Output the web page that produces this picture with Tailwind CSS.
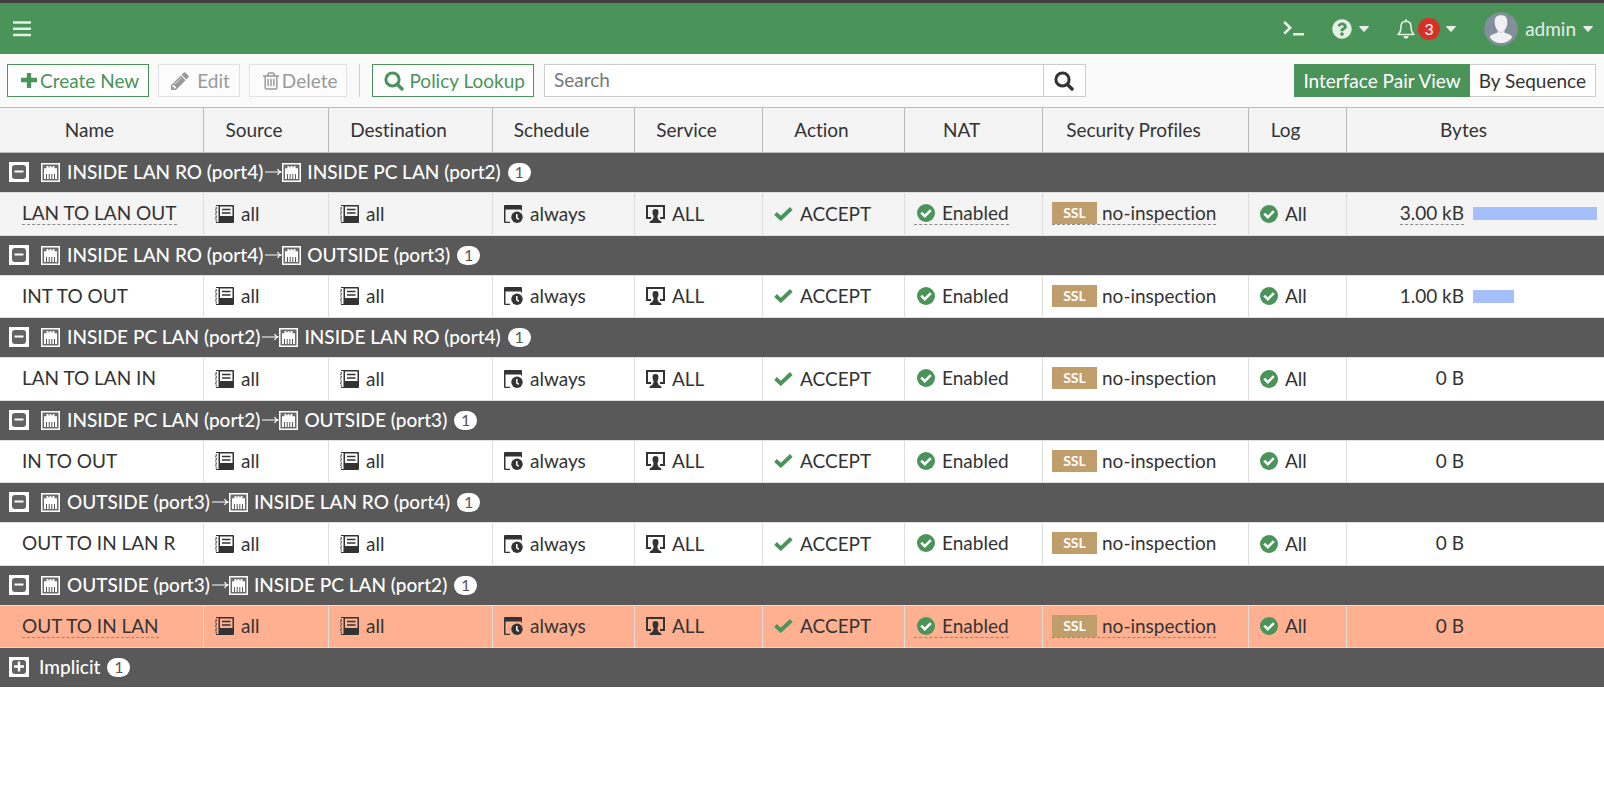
<!DOCTYPE html>
<html lang="en">
<head>
<meta charset="utf-8">
<title>Firewall Policy</title>
<script src="https://cdn.jsdelivr.net/npm/@tailwindcss/browser@4"></script>
</head>
<body class="min-h-screen bg-white font-['Lato',sans-serif] text-[19px] leading-6 text-[#333] [font-variant-ligatures:none]">
<svg class="hidden" aria-hidden="true">
  <symbol id="caret" viewBox="0 0 10 6"><path fill="currentColor" d="M.8 0h8.4q1 .2.5 1L5.6 5.4q-.6.5-1.2 0L.3 1Q-.1.2.8 0z"/></symbol>
  <symbol id="search" viewBox="0 0 20 20"><circle cx="8.5" cy="8.5" r="6.6" fill="none" stroke="currentColor" stroke-width="3"/><path d="M13.2 13.2l4.8 4.8" stroke="currentColor" stroke-width="3.4" stroke-linecap="round"/></symbol>
  <symbol id="book" viewBox="0 0 19 18"><path fill="currentColor" d="M3.500 0H18q1 0 1 1v16q0 1-1 1H3.500zM5 1.500V11h12.500V1.500z" fill-rule="evenodd"/><path d="M7 4.500h8.500M7 8h8.500" stroke="currentColor" stroke-width="1.300"/><path d="M1 .5h3M0 4.800h1.500M0 9h1.500M0 13.200h1.500M1 17.500h3M1.200 2v2M1.200 6v2M1.200 10.500v2M1.200 14.500v2" stroke="currentColor" stroke-width="1"/></symbol>
  <symbol id="schedule" viewBox="0 0 19 18"><path fill="currentColor" d="M1 0h16q1 0 1 1v4.500h-1V4.500H1.500v12.300H6V18H1q-1 0-1-1V1q0-1 1-1z"/><circle cx="13" cy="12.300" r="5.700" fill="currentColor"/><path d="M12.800 9v3.800l2 1.500" fill="none" stroke="#fff" stroke-width="1.500"/></symbol>
  <symbol id="service" viewBox="0 0 19 18"><path fill="none" stroke="currentColor" stroke-width="2" d="M5 13H1V1h17v12h-4"/><path fill="currentColor" d="M9.500 4q3 0 3 3.300 0 2-1 3.500v1.700q0 1 1 1.200v1.300q3 .5 3 3h-12q0-2.500 3-3v-1.300q1-.2 1-1.200v-1.700q-1-1.500-1-3.500Q6.500 4 9.500 4z"/></symbol>
  <symbol id="tick" viewBox="0 0 19 14"><path fill="none" stroke="currentColor" stroke-width="3.800" d="M1.500 6.500l5.300 5L17.300 1.500"/></symbol>
  <symbol id="ok" viewBox="0 0 18 18"><circle cx="9" cy="9" r="9" fill="currentColor"/><path fill="none" stroke="#fff" stroke-width="2.600" d="M4.200 8.600l3.600 3.600 6-6"/></symbol>
  <symbol id="port" viewBox="0 0 19 19"><path fill="#6a6a6a" stroke="#fff" stroke-width="1.500" d="M.75.75h17.500v17.500H.75z"/><path fill="#fff" d="M3 16V5.200h2.500V3h1.800v1.200h1.400V3h1.600v1.200h1.400V3h1.800v2.200H16V16z"/><path stroke="#595959" stroke-width="1" d="M5.500 11v5M8.200 11v5M10.800 11v5M13.500 11v5"/></symbol>
  <symbol id="arrow" viewBox="0 0 17 10"><path fill="none" stroke="currentColor" stroke-width="1.200" d="M0 5h16M12.500 2q1 2.200 3.500 3-2.500.8-3.500 3"/></symbol>
  <symbol id="minus" viewBox="0 0 20 20"><path fill="#fff" d="M0 0h20v20H0z"/><rect x="3" y="3" width="14" height="14" rx="3" fill="#636363"/><path stroke="#fff" stroke-width="2" d="M5.500 9.500h9"/></symbol>
  <symbol id="plus" viewBox="0 0 20 20"><path fill="#fff" d="M0 0h20v20H0z"/><rect x="3" y="3" width="14" height="14" rx="3" fill="#636363"/><path stroke="#fff" stroke-width="2.400" d="M5 9.500h10M10 4.500v10"/></symbol>
</svg>

<header class="flex h-[54px] items-center border-t-3 border-[#404040] bg-[#4a9359] pr-[11px] pl-[13px] text-[#e4efe6]">
  <button type="button" aria-label="Menu"><svg class="h-4 w-[18px]" viewBox="0 0 18 16"><path stroke="currentColor" stroke-width="2.600" d="M0 1.500h18M0 7.800h18M0 14h18"/></svg></button>
  <nav class="ml-auto flex items-center">
    <button type="button" aria-label="CLI console" class="mr-7"><svg class="h-[15px] w-[21px]" viewBox="0 0 21 15"><path fill="none" stroke="currentColor" stroke-width="2.600" d="M1.200 1l6 5.800-6 5.800M10 13.300h11"/></svg></button>
    <button type="button" aria-label="Help" class="mr-7 flex items-center gap-[7px]"><svg class="size-5" viewBox="0 0 512 512"><path fill="currentColor" d="M504 256c0 136.997-111.043 248-248 248S8 392.997 8 256C8 119.083 119.043 8 256 8s248 111.083 248 248zM262.655 90c-54.497 0-89.255 22.957-116.549 63.758-3.536 5.286-2.353 12.415 2.715 16.258l34.699 26.310c5.205 3.947 12.621 3.008 16.665-2.122 17.864-22.658 30.113-35.797 57.303-35.797 20.429 0 45.698 13.148 45.698 32.958 0 14.976-12.363 22.667-32.534 33.976C247.128 238.528 216 254.941 216 296v4c0 6.627 5.373 12 12 12h56c6.627 0 12-5.373 12-12v-1.333c0-28.462 83.186-29.647 83.186-106.667 0-58.002-60.165-102-116.531-102zM256 338c-25.365 0-46 20.635-46 46 0 25.364 20.635 46 46 46s46-20.636 46-46c0-25.365-20.635-46-46-46z"/></svg><svg class="h-[6px] w-[10px]"><use href="#caret"/></svg></button>
    <button type="button" aria-label="Notifications" class="mr-7 flex items-center"><svg class="mr-[3px] h-5 w-[18px]" viewBox="0 0 18 20"><path fill="none" stroke="currentColor" stroke-width="1.600" stroke-linejoin="round" d="M9 2.200C5.600 2.200 4 4.600 4 7.500c0 4-1 6.300-3 8h16c-2-1.700-3-4-3-8 0-2.900-1.600-5.300-5-5.300z"/><path stroke="currentColor" stroke-width="1.800" stroke-linecap="round" d="M9 1v1.500"/><path fill="currentColor" d="M6.500 17h5q0 2.600-2.500 2.600T6.500 17z"/></svg><span class="mr-[6px] flex size-[22px] items-center justify-center rounded-full bg-[#d83027] text-base text-white">3</span><svg class="h-[6px] w-[10px]"><use href="#caret"/></svg></button>
    <button type="button" class="flex items-center gap-[7px]"><svg class="size-[34px]" viewBox="0 0 34 34"><circle cx="17" cy="17" r="16.800" fill="#838f9b"/><path fill="#f0f1f3" d="M17 3.200c4.500 0 6.500 2.600 6.300 7 0 3.500-1 6-3 8.200v2.100c3.500 1.500 7 2 8 4.500-2.500 4-7 6-11.300 6S8.200 29 5.700 25c1-2.500 4.500-3 8-4.500v-2.100c-2-2.200-3-4.700-3-8.200-.2-4.400 1.800-7 6.300-7z"/><path fill="none" stroke="#c9cdd3" stroke-width=".8" d="M13.700 19.200q3.300 3 6.600 0"/></svg><span>admin</span><svg class="h-[6px] w-[10px]"><use href="#caret"/></svg></button>
  </nav>
</header>

<section class="flex items-center bg-[#fafafa] py-[10px] pr-2 pl-[7px]" aria-label="Policy tools">
  <button type="button" class="mr-[9px] flex h-[33px] items-center border border-[#4a9359] bg-white pr-[9px] pl-[13px] text-[#4a9359]"><svg class="mr-[3px] size-4" viewBox="0 0 16 16"><path stroke="currentColor" stroke-width="4.400" d="M0 7h16M8 0v15"/></svg>Create New</button>
  <button type="button" disabled class="mr-[9px] flex h-[33px] items-center border border-[#e2e2e2] bg-[#fcfcfc] pr-[9px] pl-3 text-[#999]"><svg class="mr-2 size-[18px]" viewBox="128 128 1536 1536"><path fill="currentColor" d="M491 1536l91-91-235-235-91 91v107h128v128h107zm523-928q0-22-22-22-10 0-17 7l-542 542q-7 7-7 17 0 22 22 22 10 0 17-7l542-542q7-7 7-17zm-54-192l416 416-832 832h-416v-416zm683 96q0 53-37 90l-166 166-416-416 166-165q36-38 90-38 53 0 91 38l235 234q37 39 37 91z"/></svg>Edit</button>
  <button type="button" disabled class="mr-3 flex h-[33px] items-center border border-[#e2e2e2] bg-[#fcfcfc] pr-[9px] pl-[13px] text-[#999]"><svg class="mr-[3px] h-[18px] w-4" viewBox="192 128 1408 1536"><path fill="currentColor" d="M704 736v576q0 14-9 23t-23 9h-64q-14 0-23-9t-9-23v-576q0-14 9-23t23-9h64q14 0 23 9t9 23zm256 0v576q0 14-9 23t-23 9h-64q-14 0-23-9t-9-23v-576q0-14 9-23t23-9h64q14 0 23 9t9 23zm256 0v576q0 14-9 23t-23 9h-64q-14 0-23-9t-9-23v-576q0-14 9-23t23-9h64q14 0 23 9t9 23zm128 724v-948h-896v948q0 22 7 40.500t14.500 27 10.500 8.500h832q3 0 10.500-8.500t14.500-27 7-40.500zm-672-1076h448l-48-117q-7-9-17-11h-317q-10 2-17 11zm928 32v64q0 14-9 23t-23 9h-96v948q0 83-47 143.500t-113 60.500h-832q-66 0-113-58.500t-47-141.500v-952h-96q-14 0-23-9t-9-23v-64q0-14 9-23t23-9h309l70-167q15-37 54-63t79-26h320q40 0 79 26t54 63l70 167h309q14 0 23 9t9 23z"/></svg>Delete</button>
  <div class="mr-3 h-[33px] w-px bg-[#ccc]"></div>
  <button type="button" class="mr-[10px] flex h-[33px] items-center border border-[#4a9359] bg-white pr-2 pl-[11px] text-[#4a9359]"><svg class="mr-[5px] size-5"><use href="#search"/></svg>Policy Lookup</button>
  <form class="flex h-[33px] w-[542px] border border-[#ccc] bg-white">
    <input type="text" aria-label="Search" placeholder="Search" class="min-w-0 flex-1 px-[9px] pb-px outline-none placeholder:text-[#777]">
    <button type="button" aria-label="Run search" class="flex w-[42px] items-center justify-center border-l border-[#ccc]"><svg class="size-5"><use href="#search"/></svg></button>
  </form>
  <div class="ml-auto flex h-[33px]">
    <button type="button" aria-pressed="true" class="bg-[#4a9359] px-[9px] text-white">Interface Pair View</button>
    <button type="button" aria-pressed="false" class="border border-l-0 border-[#ccc] bg-white px-[9px]">By Sequence</button>
  </div>
</section>

<table class="w-full table-fixed border-separate border-spacing-0">
  <colgroup>
    <col class="w-[204px]"><col class="w-[125px]"><col class="w-[164px]"><col class="w-[142px]"><col class="w-[128px]"><col class="w-[142px]"><col class="w-[138px]"><col class="w-[206px]"><col class="w-[98px]"><col>
  </colgroup>
  <thead><tr id="head" class="h-[46px] bg-[#f4f4f4]"></tr></thead>
  <tbody id="policies"></tbody>
</table>

<script>
const icon = (name, cls) => `<svg class="${cls}"><use href="#${name}"/></svg>`;
const titles = ['Name', 'Source', 'Destination', 'Schedule', 'Service', 'Action', 'NAT', 'Security Profiles', 'Log', 'Bytes'];
document.getElementById('head').innerHTML = titles.map(t =>
  `<th scope="col" class="border-y border-r border-[#bbb] pr-6 text-center font-normal last:border-r-0">${t}</th>`).join('');

const R = 'INSIDE LAN RO (port4)', P = 'INSIDE PC LAN (port2)', O = 'OUTSIDE (port3)';
const groups = [
  { from: R, to: P, name: 'LAN TO LAN OUT', bytes: '3.00 kB', bar: 100, marked: true, tone: 'bg-[#f4f4f4]' },
  { from: R, to: O, name: 'INT TO OUT', bytes: '1.00 kB', bar: 33, tone: 'bg-white' },
  { from: P, to: R, name: 'LAN TO LAN IN', bytes: '0 B', bar: 0, tone: 'bg-white' },
  { from: P, to: O, name: 'IN TO OUT', bytes: '0 B', bar: 0, tone: 'bg-white' },
  { from: O, to: R, name: 'OUT TO IN LAN R', bytes: '0 B', bar: 0, tone: 'bg-white' },
  { from: O, to: P, name: 'OUT TO IN LAN', bytes: '0 B', bar: 0, marked: true, tone: 'bg-[#ffb091]' },
];
const count = '<span class="ml-[7px] flex h-[19px] w-[23px] items-center justify-center rounded-full bg-white text-base font-normal text-[#555]">1</span>';
const groupRow = inner => `<tr class="h-[39px] bg-[#595959] text-white"><th colspan="10" scope="colgroup" class="pb-px pl-[9px] text-left font-medium"><div class="flex items-center">${inner}</div></th></tr>`;
const td = inner => `<td class="border-y border-r border-[#ddd] pb-px pl-[11px] last:border-r-0"><div class="flex items-center gap-[7px]">${inner}</div></td>`;

document.getElementById('policies').innerHTML = groups.map((g, i) => {
  const line = g.marked ? 'border-b border-dashed border-[#8a8a8a]' : 'border-b border-transparent';
  const small = 'h-[18px] w-[19px] shrink-0';
  return groupRow(`<button type="button" aria-label="Collapse group" class="mr-3">${icon('minus', 'size-5')}</button>${icon('port', 'mr-[7px] size-[19px]')}<span>${g.from}</span>${icon('arrow', 'ml-[2px] h-[10px] w-[17px]')}${icon('port', 'mr-[6px] size-[19px]')}<span>${g.to}</span>${count}`)
  + `<tr class="${i % 2 ? 'h-[43px]' : 'h-[44px]'} ${g.tone}">`
  + `<td class="border-y border-r border-[#ddd] pb-px pl-[22px]"><div class="w-fit leading-[22px] ${line}">${g.name}</div></td>`
  + td(icon('book', small) + '<span>all</span>')
  + td(icon('book', small) + '<span>all</span>')
  + td(icon('schedule', small) + '<span>always</span>')
  + td(icon('service', small) + '<span>ALL</span>')
  + td(icon('tick', 'h-[14px] w-[19px] text-[#4a9359]') + '<span>ACCEPT</span>')
  + `<td class="border-y border-r border-[#ddd] pb-px pl-[9px]"><div class="flex w-fit items-center gap-[7px] pl-[3px] leading-[22px] ${line}">${icon('ok', 'size-[18px] text-[#4a9359]')}<span>Enabled</span></div></td>`
  + `<td class="border-y border-r border-[#ddd] pb-px pl-[9px]"><div class="flex w-fit items-center gap-[5px] leading-[22px] ${line}"><span class="flex h-[22px] w-[45px] items-center justify-center bg-[#bf9e6c] text-sm font-bold text-white">SSL</span><span>no-inspection</span></div></td>`
  + td(icon('ok', 'size-[18px] text-[#4a9359]') + '<span>All</span>')
  + `<td class="border-y border-[#ddd] pr-[7px] pb-px"><div class="flex items-center gap-[9px]"><div class="flex w-[117px] justify-end"><span class="leading-[22px] ${g.bar === 100 ? line : 'border-b border-transparent'}">${g.bytes}</span></div><div class="flex-1"><div class="h-[13px] bg-[#a4bffc]" style="width:${g.bar}%"></div></div></div></td></tr>`;
}).join('') + groupRow(`<button type="button" aria-label="Expand group" class="mr-[10px]">${icon('plus', 'size-5')}</button><span>Implicit</span>${count}`);
</script>
</body>
</html>
